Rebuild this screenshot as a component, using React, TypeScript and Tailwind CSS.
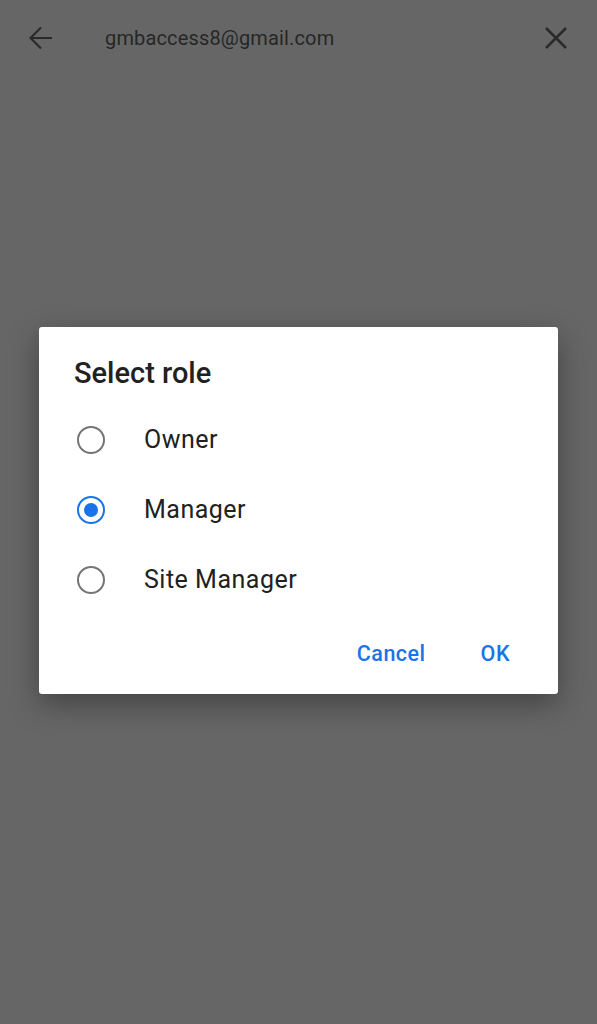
import { useState } from "react";

const ROLES = ["Owner", "Manager", "Site Manager"];

export default function App() {
  const [role, setRole] = useState("Manager");

  return (
    <div className="min-h-[1024px] w-full bg-[#666666] font-['Roboto',sans-serif]">
      {/* Header (under scrim) */}
      <div className="flex h-[75px] items-center pl-[29px] pr-[30px]">
        <svg width="24" height="24" viewBox="0 0 24 24" className="text-[#2a2a2a]">
          <path d="M23 12H2M12 1.5 1.5 12 12 22.5" fill="none" stroke="currentColor" strokeWidth="2.2" />
        </svg>
        <span className="ml-[52px] text-[20px] tracking-[0.15px] text-[#262626]">gmbaccess8@gmail.com</span>
        <svg width="22" height="22" viewBox="0 0 22 22" className="ml-auto text-[#2a2a2a]">
          <path d="M1 1 21 21M21 1 1 21" fill="none" stroke="currentColor" strokeWidth="2.5" />
        </svg>
      </div>

      {/* Dialog */}
      <div className="mt-[252px] flex justify-center">
        <div className="w-[519px] rounded-[3px] bg-white shadow-[0_10px_30px_rgba(0,0,0,0.35)]">
          <h2 className="pl-[35px] pt-[28px] text-[29px] font-medium leading-[36px] text-[#212121]">
            Select role
          </h2>
          <div className="mt-[14px]">
            {ROLES.map((r) => {
              const selected = role === r;
              return (
                <button
                  key={r}
                  type="button"
                  onClick={() => setRole(r)}
                  className="flex h-[70px] w-full items-center pl-[38px] text-left"
                >
                  <span
                    className={`flex h-[28px] w-[28px] items-center justify-center rounded-full border-[2.5px] ${
                      selected ? "border-[#1a73e8]" : "border-[#757575]"
                    }`}
                  >
                    {selected && <span className="h-[14px] w-[14px] rounded-full bg-[#1a73e8]" />}
                  </span>
                  <span className="ml-[39px] text-[25px] leading-[32px] tracking-[0.5px] text-[#212121]">
                    {r}
                  </span>
                </button>
              );
            })}
          </div>
          <div className="mt-[24px] flex items-center justify-end gap-[55px] pb-[25px] pr-[48px]">
            <button type="button" className="text-[21.5px] font-medium leading-[30px] tracking-[0.5px] text-[#1a73e8]">
              Cancel
            </button>
            <button type="button" className="text-[21.5px] font-medium leading-[30px] tracking-[0.5px] text-[#1a73e8]">
              OK
            </button>
          </div>
        </div>
      </div>
    </div>
  );
}
